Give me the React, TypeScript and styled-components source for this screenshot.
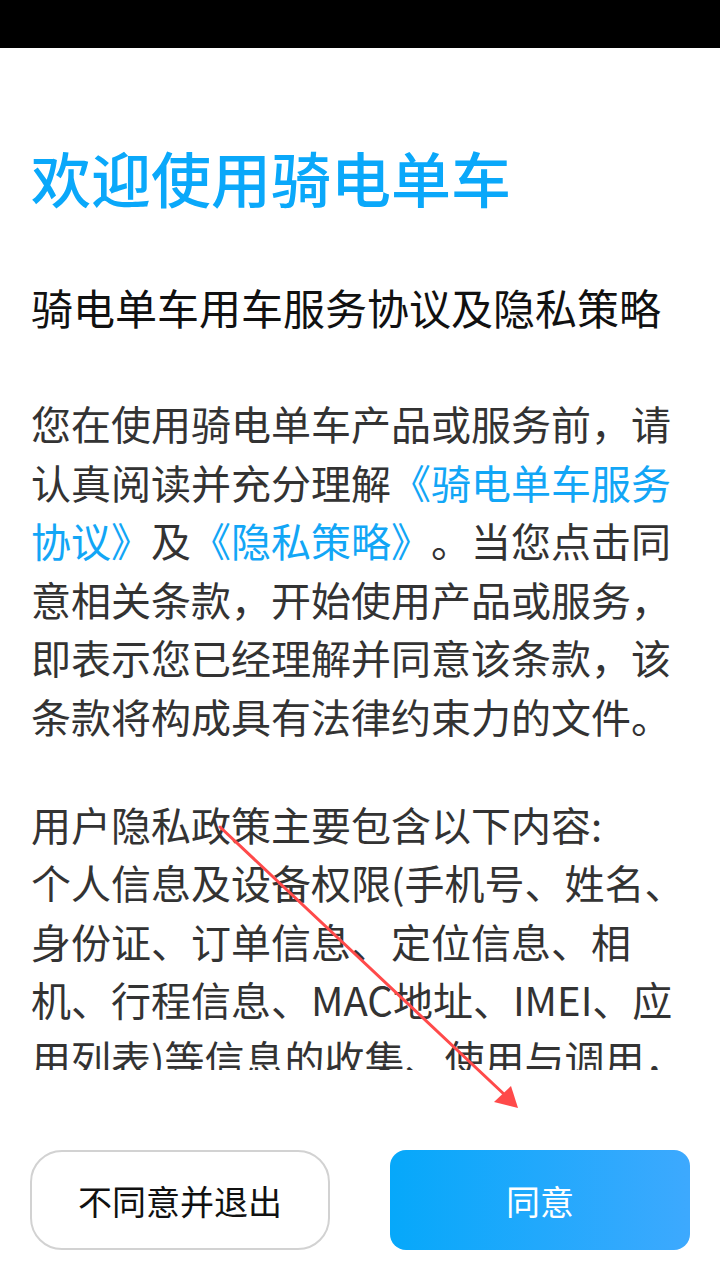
import React from 'react'
import styled, { createGlobalStyle } from 'styled-components';

const GlobalStyle = createGlobalStyle`
    html, body {
        margin: 0;
        padding: 0;
        background: #ffffff;
    }
    body {
        font-family: "Noto Sans CJK SC", "Noto Sans", sans-serif;
    }
`;

const Page = styled.div`
    position: relative;
    width: 720px;
    height: 1280px;
    display: flex;
    flex-direction: column;
    background: #ffffff;
    overflow: hidden;
`;
const StatusBar = styled.div`
    height: 48px;
    background: #000000;
    flex-shrink: 0;
`;
const Content = styled.div`
    padding: 0 32px 0 31px;
    display: flex;
    flex-direction: column;
`;
const Title = styled.h1`
    margin: 93px 0 0;
    font-size: 60px;
    line-height: 72px;
    font-weight: 500;
    color: #0aa8fa;
`;
const SubTitle = styled.h2`
    margin: 65px 0 0;
    font-size: 42px;
    line-height: 58px;
    font-weight: 400;
    color: #111111;
`;
const Scroller = styled.div`
    margin-top: 58px;
    height: 676px;
    overflow: hidden;
`;
const Para = styled.p<{ $gap?: number }>`
    margin: ${p => p.$gap || 0}px 0 0;
    font-size: 40px;
    line-height: 58.6px;
    color: #333333;
    text-spacing-trim: space-all;
    word-break: normal;
    line-break: strict;
`;
const Link = styled.span`
    color: #12a6f6;
`;
const Footer = styled.div`
    margin-top: auto;
    padding: 0 30px 30px;
    display: flex;
    justify-content: space-between;
`;
const Button = styled.button<{ $primary?: boolean }>`
    width: 300px;
    height: 100px;
    box-sizing: border-box;
    font-family: "Noto Sans CJK SC", "Noto Sans", sans-serif;
    font-size: 34px;
    border-radius: ${p => p.$primary ? '16px' : '32px'};
    border: ${p => p.$primary ? 'none' : '2px solid #d2d2d2'};
    background: ${p => p.$primary ? 'linear-gradient(90deg, #06a8fa 0%, #3da9fe 100%)' : '#ffffff'};
    color: ${p => p.$primary ? '#ffffff' : '#111111'};
    padding: 0;
`;
const Overlay = styled.svg`
    position: absolute;
    left: 0;
    top: 0;
    pointer-events: none;
`;

const App: React.FC = () => {
    return (
        <>
            <GlobalStyle />
            <Page>
                <StatusBar />
                <Content>
                    <Title>欢迎使用骑电单车</Title>
                    <SubTitle>骑电单车用车服务协议及隐私策略</SubTitle>
                    <Scroller>
                        <Para>
                            您在使用骑电单车产品或服务前，请认真阅读并充分理解<Link>《骑电单车服务协议》</Link>及<Link>《隐私策略》</Link>。当您点击同意相关条款，开始使用产品或服务，即表示您已经理解并同意该条款，该条款将构成具有法律约束力的文件。
                        </Para>
                        <Para $gap={49}>
                            用户隐私政策主要包含以下内容:<br />
                            个人信息及设备权限(手机号、姓名、身份证、订单信息、定位信息、相机、行程信息、MAC地址、IMEI、应用列表)等信息的收集、使用与调用，以及信息的存储与保护方式。
                        </Para>
                    </Scroller>
                </Content>
                <Footer>
                    <Button>不同意并退出</Button>
                    <Button $primary>同意</Button>
                </Footer>
                <Overlay width="720" height="1280" viewBox="0 0 720 1280">
                    <line x1="220" y1="827" x2="506" y2="1096" stroke="#ff4a4a" strokeWidth="3" strokeLinecap="round" />
                    <polygon points="518,1108 494,1102 511,1086" fill="#ff4a4a" />
                </Overlay>
            </Page>
        </>
    )
}

export default App
